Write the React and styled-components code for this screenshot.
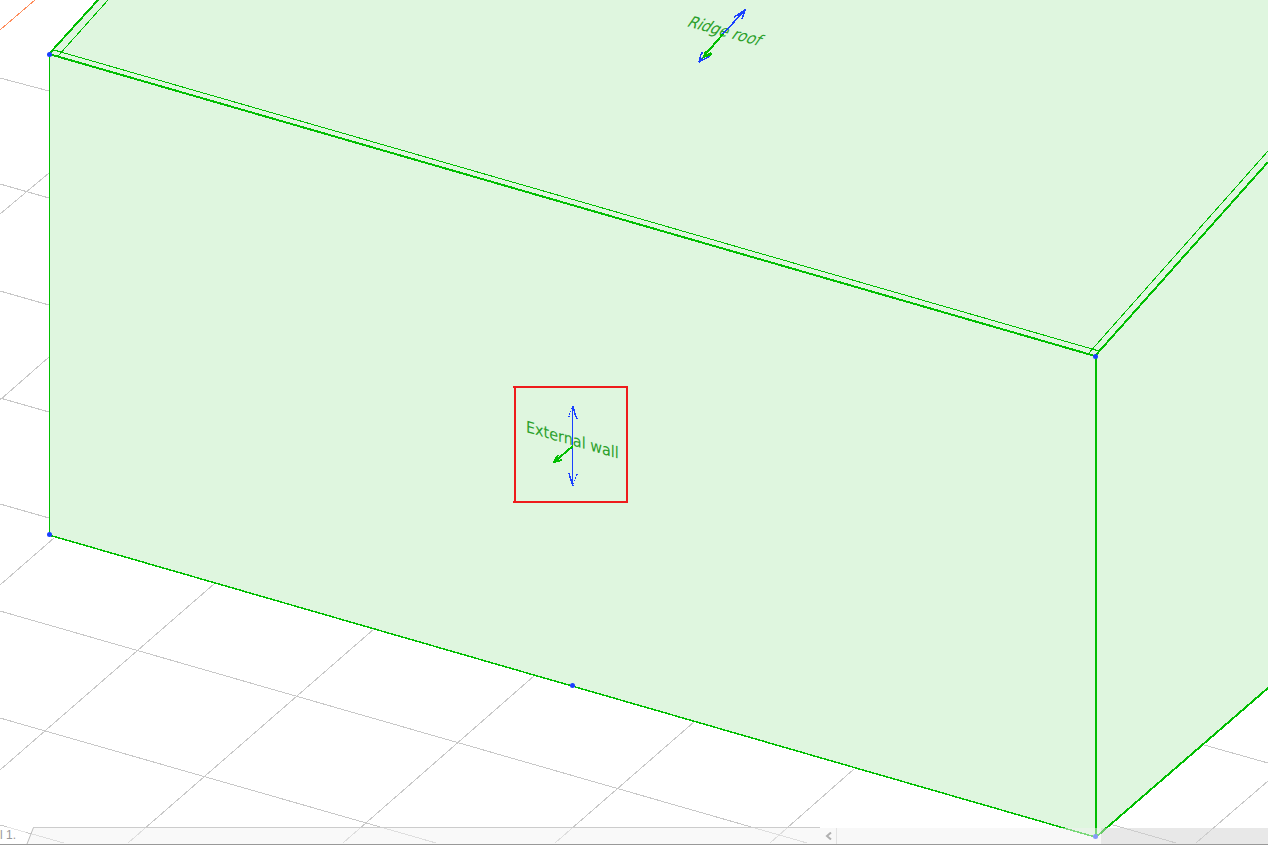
import React from "react";
import styled, { createGlobalStyle } from "styled-components";

const GREEN = "#00be00";
const BLUE = "#1a40ff";

const floorLines = [
  "M0 78L49 91", "M0 184L49 198", "M0 291L49 305", "M0 398L49 412", "M0 504L49 518",
  "M0 611L807 843", "M0 718L436 843", "M0 825L64 843",
  "M1204 745L1268 763", "M1096 820L1176 843",
  "M0 214L49 173", "M0 400L49 357", "M0 585L54 538", "M0 770L214 584",
  "M128 843L374 629", "M343 843L534 676", "M555 843L694 722", "M770 843L854 769",
  "M1196 843L1268 781",
];

const nodes = [[49, 54], [1095, 356], [49, 534], [572, 685], [1095, 836]];

const Model = () => (
  <Scene viewBox="0 0 1268 845" preserveAspectRatio="xMinYMin slice" role="img" aria-label="3D model view">
    <path className="grid" d={floorLines.join("")} />
    <path className="axis" d="M0 30L35 0" />
    <path className="face" d="M49 54L98 0H1268V687L1095 837L49 535Z" />
    <path className="edge thin" d="M49 54V535M54 50L1099 351M58 56L108 0M1088 354L1268 151" />
    <path className="edge" d="M98 0L49 54L1095 356L1268 162M1096 356V837" />
    <path className="edge" d="M1096 837L1268 688" />
    <path className="edge base" d="M49 535L1095 837" />
    {nodes.map(([x, y]) => <circle key={`${x}-${y}`} cx={x + 0.5} cy={y + 0.5} r="2.5" fill={BLUE} />)}

    <text className="roof" transform="matrix(1 .275 -.7 1 686 26)">Ridge roof</text>
    <path className="arrow" d="M722 35L745 10M734 17L745 10L742 19M738 17L745 10" />
    <path className="arrow" d="M703 57L699 62L710 56M701 54L699 62M702 52v2" />
    <path className="arrow normal" d="M723 34L704 56M706 51L704 57L711 53M708 50L704 57L712 54" />

    <text className="wall" transform="matrix(1 .288 0 1 526 432)">External wall</text>
    <path className="arrow line" d="M572.5 406V486" />
    <path className="arrow" d="M573 406L575 414L577 419M569 473L571 480L573 486" />
    <path className="arrow dots" d="M572 408L569 415M573 484L577 474" />
    <path className="arrow" d="M568 416.5h2M576 474.5h2" />
    <path className="arrow normal" d="M573 446L554 462M558 455L554 462L562 460" />
    <path className="frame" d="M513 387H627V502H513M515 386V502" />
  </Scene>
);

const App = () => {
  return (
    <Viewport>
      <GlobalStyle />
      <Model />
      <BottomBar>
        <SheetName>l 1.</SheetName>
        <Slant viewBox="0 0 8 17" aria-hidden="true">
          <path d="M8 0V17H1Z" fill="#f3f3f3" fillOpacity="0.5" />
          <path d="M1 17L7.5 0.5H8" fill="none" stroke="#bbb" />
        </Slant>
        <TabFill />
        <ScrollBar>
          <ScrollButton type="button" aria-label="Scroll left">
            <svg width="7" height="8" viewBox="0 0 7 8" aria-hidden="true">
              <path d="M6 0.5L2 4L6 7.5" fill="none" stroke="#b0b0b0" strokeWidth="2" />
            </svg>
          </ScrollButton>
          <Track />
          <Thumb />
        </ScrollBar>
      </BottomBar>
    </Viewport>
  );
}

const GlobalStyle = createGlobalStyle`
  body {
    margin: 0;
    background: #fff;
    overflow: hidden;
  }
`

const Viewport = styled.main`
  position: relative;
  height: 100vh;
  overflow: hidden;
`

const Scene = styled.svg`
  display: block;
  width: 100%;
  height: 100%;
  path {
    fill: none;
    shape-rendering: crispEdges;
  }
  .grid {
    stroke: #c8c8c8;
  }
  .axis {
    stroke: #ff8c5a;
  }
  .face {
    fill: #dff6df;
  }
  .edge {
    stroke: ${GREEN};
    stroke-width: 2;
  }
  .thin {
    stroke-width: 1;
  }
  .base {
    stroke-width: 1.5;
  }
  .arrow {
    stroke: ${BLUE};
    stroke-width: 1.5;
  }
  .line {
    stroke-width: 1;
  }
  .dots {
    stroke-width: 1;
    stroke-dasharray: 1 2;
  }
  .normal {
    stroke: ${GREEN};
    stroke-width: 2;
  }
  .frame {
    stroke: #ee1c1c;
    stroke-width: 2;
  }
  text {
    fill: #2ba02b;
  }
  .roof {
    font: 14px "DejaVu Sans", sans-serif;
  }
  .wall {
    font: 16px "DejaVu Sans Condensed", "Open Sans", sans-serif;
  }
`

const BottomBar = styled.footer`
  position: absolute;
  left: 0;
  right: 0;
  bottom: 0;
  display: flex;
  height: 17px;
  border-bottom: 1px solid #999;
`

const SheetName = styled.span`
  width: 26px;
  font: 12px/17px "Liberation Sans", sans-serif;
  color: #999;
  background: rgba(255, 255, 255, 0.5);
`

const Slant = styled.svg`
  width: 8px;
  height: 17px;
`

const TabFill = styled.div`
  flex: 786;
  border-top: 1px solid #ccc;
  background: rgba(243, 243, 243, 0.5);
`

const ScrollBar = styled.div`
  flex: 448;
  display: flex;
  margin-top: 1px;
`

const ScrollButton = styled.button`
  display: flex;
  align-items: center;
  justify-content: center;
  width: 17px;
  padding: 0;
  border: 0;
  border-right: 1px solid #e2e2e2;
  background: rgba(241, 241, 241, 0.5);
`

const Track = styled.div`
  flex: 264;
  background: rgba(241, 241, 241, 0.5);
`

const Thumb = styled.div`
  flex: 167;
  background: rgba(209, 209, 209, 0.5);
`

export default App;
